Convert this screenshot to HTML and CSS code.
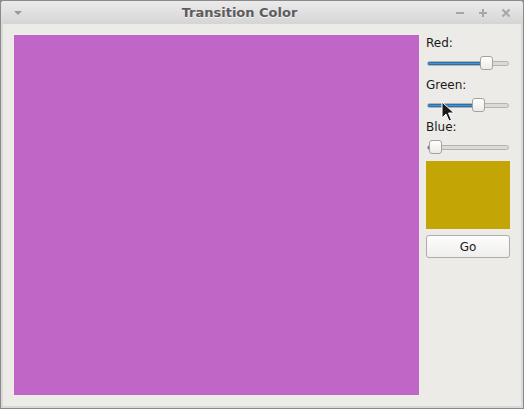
FILE: index.html
```html
<!DOCTYPE html>
<html>
<head>
<meta charset="utf-8">
<link rel="stylesheet" href="styles.css">
</head>
<body>
<div class="window">
  <div class="titlebar">
    <svg class="menu-btn" width="10" height="6" viewBox="0 0 10 6"><path d="M1 1h8L5 5z" fill="#9a9a9a"/></svg>
    <div class="title">Transition Color</div>
    <div class="controls">
      <svg width="10" height="10" viewBox="0 0 10 10"><rect x="1" y="4" width="8" height="2" fill="#a6a6a6"/></svg>
      <svg width="10" height="10" viewBox="0 0 10 10"><rect x="1" y="4" width="8" height="2" fill="#a6a6a6"/><rect x="4" y="1" width="2" height="8" fill="#a6a6a6"/></svg>
      <svg width="10" height="10" viewBox="0 0 10 10"><path d="M1.5 1.5l7 7M8.5 1.5l-7 7" stroke="#a6a6a6" stroke-width="2"/></svg>
    </div>
  </div>
  <div class="content">
    <div class="canvas"></div>
    <div class="panel">
      <div class="label">Red:</div>
      <div class="slider"><div class="track"><div class="fill" style="width:55px"></div></div><div class="handle" style="left:54px"></div></div>
      <div class="label">Green:</div>
      <div class="slider"><div class="track"><div class="fill" style="width:47px"></div></div><div class="handle" style="left:46px"></div></div>
      <div class="label">Blue:</div>
      <div class="slider"><div class="track"><div class="fill" style="width:4px"></div></div><div class="handle" style="left:3px"></div></div>
      <div class="swatch"></div>
      <button class="go">Go</button>
    </div>
  </div>
  <svg class="cursor" width="14" height="22" viewBox="0 0 14 22"><path d="M1 1v16l4-4 3 7 2.5-1-3-7h5.5z" fill="#1a1a1a" stroke="#fff" stroke-width="1"/></svg>
</div>
</body>
</html>
```

FILE: styles.css
```css
html, body { margin: 0; padding: 0; }
body { width: 524px; height: 409px; overflow: hidden; background: #8c8c8c; font-family: "DejaVu Sans", sans-serif; }
.window {
  position: relative;
  box-sizing: border-box;
  width: 524px; height: 409px;
  border: 1px solid #8a8a8a;
  border-radius: 4px 4px 0 0;
  background: #d9d9d9;
  display: flex; flex-direction: column;
}
.titlebar {
  height: 23px;
  flex: none;
  display: flex; align-items: center;
  background: linear-gradient(#ebebeb, #d5d5d5);
  border-radius: 3px 3px 0 0;
  position: relative;
}
.menu-btn { margin-left: 12px; margin-top: 1px; }
.title {
  position: absolute; left: 0; right: 45px; top: 4px;
  text-align: center;
  font-weight: bold; font-size: 13px; color: #5c5c5c;
  text-shadow: 0 1px 0 #f4f4f4;
  pointer-events: none;
}
.controls { margin-left: auto; margin-right: 12px; display: flex; gap: 13px; margin-top: 1px; }
.content {
  flex: 1;
  margin: 0 2px 2px 2px;
  background: #edebe7;
  display: flex;
  padding: 11px 11px 10px 11px;
  gap: 7px;
}
.canvas { width: 405px; height: 360px; background: #bf66c6; flex: none; }
.panel { width: 84px; display: flex; flex-direction: column; }
.label { font-size: 12px; line-height: 14px; height: 14px; color: #1a1a1a; margin-top: 1px; }
.slider { position: relative; height: 22px; margin: 2px 0 3px; }
.track {
  position: absolute; left: 1px; right: 1px; top: 9px;
  background: #dcdad5; border: 1px solid #b5b3ae; border-radius: 3px;
  box-sizing: border-box; height: 5px;
  overflow: hidden;
}
.fill { height: 100%; background: #3d95dc; box-shadow: inset 0 0 0 1px #2e6fa8; }
.handle {
  position: absolute; top: 4px; width: 13px; height: 14px; box-sizing: border-box;
  border: 1px solid #a5a39f; border-radius: 3px;
  background: linear-gradient(#ffffff, #ecebe8);
}
.swatch { height: 68px; background: #c4a506; }
.go {
  margin-top: 6px; height: 23px; width: 84px;
  border: 1px solid #aeaca8; border-radius: 3px;
  background: linear-gradient(#fdfdfd, #efeeec);
  font-family: "DejaVu Sans", sans-serif; font-size: 12px; color: #1a1a1a;
  padding: 0;
}
.cursor { position: absolute; left: 440px; top: 100px; }
```
